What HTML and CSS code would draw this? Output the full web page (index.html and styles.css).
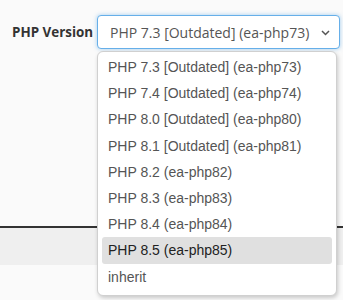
FILE: index.html
```html
<!DOCTYPE html>
<html>
<head>
<meta charset="utf-8">
<link rel="stylesheet" href="styles.css">
</head>
<body>
<div class="page">
  <div class="form-row">
    <label class="label">PHP Version</label>
    <div class="select-wrap">
      <div class="select">
        <span class="select-text">PHP 7.3 [Outdated] (ea-php73)</span>
        <svg class="chevron" width="9" height="6" viewBox="0 0 9 6"><path d="M1 1 L4.5 4.5 L8 1" fill="none" stroke="#555" stroke-width="1.5"/></svg>
      </div>
      <ul class="menu">
        <li class="item">PHP 7.3 [Outdated] (ea-php73)</li>
        <li class="item">PHP 7.4 [Outdated] (ea-php74)</li>
        <li class="item">PHP 8.0 [Outdated] (ea-php80)</li>
        <li class="item">PHP 8.1 [Outdated] (ea-php81)</li>
        <li class="item">PHP 8.2 (ea-php82)</li>
        <li class="item">PHP 8.3 (ea-php83)</li>
        <li class="item">PHP 8.4 (ea-php84)</li>
        <li class="item active">PHP 8.5 (ea-php85)</li>
        <li class="item">inherit</li>
      </ul>
    </div>
  </div>
  <div class="spacer"></div>
  <div class="rule"></div>
  <div class="band"></div>
</div>
</body>
</html>
```
FILE: styles.css
```css
html, body {
  margin: 0;
  padding: 0;
  background: #fafafa;
}
.page {
  width: 343px;
  height: 300px;
  overflow: hidden;
}
.form-row {
  display: flex;
  align-items: center;
  padding-top: 15px;
  padding-left: 12px;
}
.label {
  font-family: "Open Sans", sans-serif;
  font-weight: 700;
  font-size: 13.4px;
  color: #333;
  width: 85px;
}
.select-wrap {
  position: relative;
}
.select {
  box-sizing: border-box;
  width: 243px;
  height: 34px;
  border: 1px solid #66afe9;
  border-radius: 4px;
  background: #fff;
  box-shadow: 0 0 4px rgba(102, 175, 233, 0.6);
  display: flex;
  align-items: center;
  justify-content: space-between;
  padding: 0 9px 0 12px;
}
.select-text {
  font-family: "Open Sans", sans-serif;
  font-size: 14px;
  color: #555;
}
.chevron {
  display: block;
  margin-top: 1px;
}
.menu {
  position: absolute;
  top: 36px;
  left: 0;
  box-sizing: border-box;
  width: 240px;
  margin: 0;
  padding: 2px 4px 5px;
  list-style: none;
  background: #fff;
  border: 1px solid #d0d0d0;
  border-radius: 6px;
  box-shadow: 1px 2px 4px rgba(0, 0, 0, 0.2);
}
.item {
  height: 26.2px;
  line-height: 26px;
  padding-left: 6px;
  font-family: "Liberation Sans", Arial, sans-serif;
  font-size: 14px;
  color: #555;
  border-radius: 3px;
}
.item.active {
  background: #e0e0e0;
  color: #222;
}
.spacer {
  height: 177px;
}
.rule {
  height: 2px;
  background: #333;
}
.band {
  height: 37px;
  background: #efefef;
}
```
